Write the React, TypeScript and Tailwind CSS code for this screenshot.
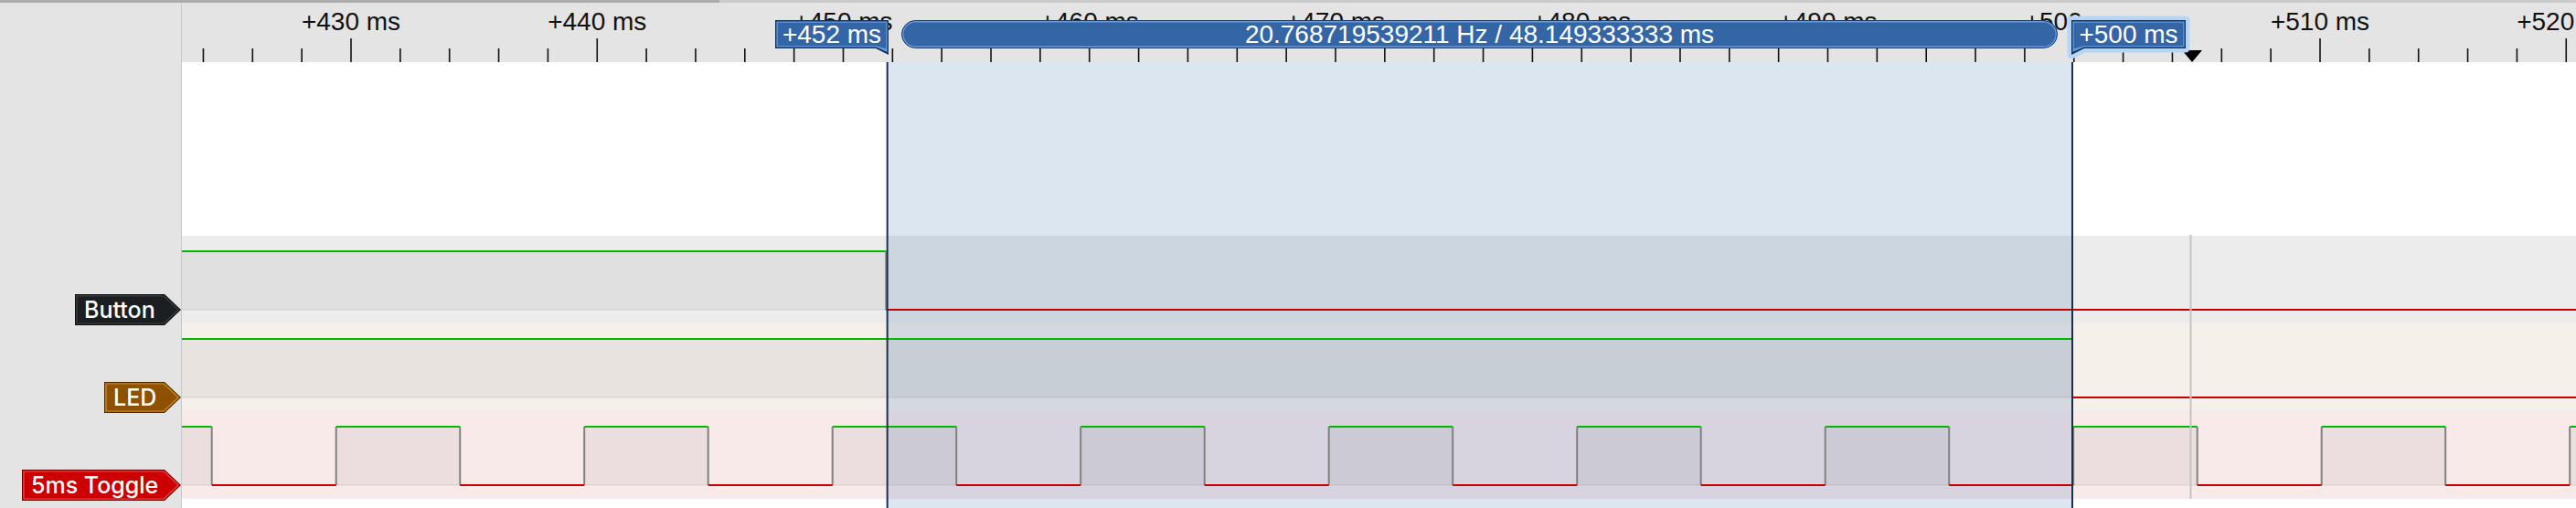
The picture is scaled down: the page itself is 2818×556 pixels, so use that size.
import React from "react";

// time axis: px per ms, x relative to the ruler/wave origin (page x = 199)
const PX_MS = 26.925;
const tx = (t: number) => 185 + (t - 430) * PX_MS;

const WAVE_W = 2619;
const SEL_L = 771.7;
const SEL_R = 2068;

const channels = [
  { name: "Button", w: 116, wc: "w-[116px]", fill: "#1c1f21", outer: "#0d0e0f", inner: "#3b3e40" },
  { name: "LED", w: 84, wc: "w-[84px]", fill: "#8d5100", outer: "#4a2b00", inner: "#d98a1b" },
  { name: "5ms Toggle", w: 174, wc: "w-[174px]", fill: "#cc0000", outer: "#6b0000", inner: "#ff3c3c" },
];

function Tag({ ch }: { ch: (typeof channels)[number] }) {
  const w = ch.w;
  const pts = (i: number) =>
    `${i},${i} ${w - 18 - 0.414 * i},${i} ${w - 1.414 * i},17 ${w - 18 - 0.414 * i},${34 - i} ${i},${34 - i}`;
  return (
    <div className={`relative h-[34px] ${ch.wc}`}>
      <svg className="absolute inset-0" width={w} height={34} viewBox={`0 0 ${w} 34`}>
        <polygon points={pts(0)} fill={ch.outer} />
        <polygon points={pts(1.2)} fill={ch.inner} />
        <polygon points={pts(2.6)} fill={ch.fill} />
      </svg>
      <span className="relative flex h-full items-center pl-[10px] font-['Inter',sans-serif] text-[25px] leading-none font-medium text-white">
        {ch.name}
      </span>
    </div>
  );
}

function Ruler() {
  const ticks: number[] = [];
  for (let t = 422; t <= 522; t += 2) ticks.push(t);
  const labels = ticks.filter((t) => t % 10 === 0);
  return (
    <div className="relative h-[65px] shrink-0 overflow-hidden bg-[#e4e4e4]">
      <svg className="absolute inset-0" width={WAVE_W} height={65}>
        {ticks.map((t) => {
          const x = tx(t);
          return (
            <line key={t} x1={x} x2={x} y1={t % 10 === 0 ? 39 : 50} y2={65} stroke="#111" strokeWidth={1.6} />
          );
        })}
        {labels.map((t) => (
          <text key={t} x={tx(t)} y={30} textAnchor="middle" fontSize={28} fill="#111">
            +{t} ms
          </text>
        ))}
        <polygon points="2188,52 2210,52 2199,65" fill="#000" />
      </svg>

      {/* start marker */}
      <div className="absolute left-[649px] top-[19px] h-[38px] w-[124px]">
        <svg className="absolute inset-0" width={124} height={38}>
          <path d="M0,0H124V38L110,31H0Z" fill="#1b3253" />
          <path d="M1.4,1.4H122.6V35L110.6,29.6H1.4Z" fill="#5f9fe9" />
          <path d="M2.7,2.7H121.3V31.5L111,28.3H2.7Z" fill="#3465a6" />
        </svg>
        <div className="relative flex h-[31px] items-center justify-center text-[28px] leading-none text-white">
          +452 ms
        </div>
      </div>

      {/* frequency / period pill */}
      <div className="absolute left-[787px] top-[19px] flex h-[31px] w-[1265px] items-center justify-center rounded-full border border-[#1f395d] bg-[#3466a6] text-[28px] leading-none text-white shadow-[inset_0_0_0_1.5px_#5e9de8]">
        20.768719539211 Hz / 48.149333333 ms
      </div>

      {/* end marker (selected) */}
      <div className="absolute left-[2062px] top-[14px] h-[49px] w-[135px]">
        <svg className="absolute inset-0" width={135} height={49}>
          <path
            d="M5,5H130V36H19L5,43Z"
            fill="#b6d6f8"
            stroke="#b6d6f8"
            strokeWidth={9}
            strokeLinejoin="round"
          />
          <path d="M5,5H130V36H19L5,43Z" fill="#1b3253" />
          <path d="M6.4,6.4H128.6V34.6H18.6L6.4,40Z" fill="#5f9fe9" />
          <path d="M7.7,7.7H127.3V33.3H18L7.7,36.5Z" fill="#3465a6" />
        </svg>
        <div className="absolute left-[5px] top-[5px] flex h-[31px] w-[125px] items-center justify-center text-[28px] leading-none text-white">
          +500 ms
        </div>
      </div>
    </div>
  );
}

function Waveforms() {
  const P = 271.5;
  const fall = Array.from({ length: 10 }, (_, k) => 32.7 + k * P);
  const rise = Array.from({ length: 10 }, (_, k) => 168.7 + k * P);
  const highs: [number, number][] = [[0, fall[0]]];
  rise.forEach((r, k) => highs.push([r, Math.min(fall[k + 1] ?? WAVE_W, WAVE_W)]));
  const lows: [number, number][] = fall.map((f, k) => [f, Math.min(rise[k], WAVE_W)]);
  const edges = [...fall, ...rise].filter((x) => x < WAVE_W);

  const green = "#00b900";
  const red = "#c80000";
  const gray = "#808080";
  const sw = 2;

  return (
    <div className="h-[488px] shrink-0 bg-white">
      <svg width={WAVE_W} height={488}>
        {/* row bands */}
        <rect x={0} y={190} width={WAVE_W} height={96} fill="#ececec" />
        <rect x={0} y={286} width={WAVE_W} height={96} fill="#f5f0ea" />
        <rect x={0} y={382} width={WAVE_W} height={96} fill="#f9eaea" />

        {/* fill under high level */}
        <rect x={0} y={207} width={770.3} height={64} fill="#000" fillOpacity={0.05} />
        <rect x={0} y={303} width={SEL_R} height={64} fill="#000" fillOpacity={0.05} />
        {highs.map(([a, b], i) => (
          <rect key={i} x={a} y={399} width={b - a} height={64} fill="#000" fillOpacity={0.05} />
        ))}

        {/* faint baselines */}
        {[271, 367, 463].map((y) => (
          <line key={y} x1={0} x2={WAVE_W} y1={y} y2={y} stroke="#000" strokeOpacity={0.07} strokeWidth={1.5} />
        ))}

        {/* selection */}
        <rect x={SEL_L} y={0} width={SEL_R - SEL_L} height={488} fill="rgb(40,97,166)" fillOpacity={0.16} />

        {/* Button */}
        <line x1={0} x2={770.3} y1={207} y2={207} stroke={green} strokeWidth={sw} />
        <line x1={770.3} x2={770.3} y1={207} y2={271} stroke={gray} strokeWidth={sw} />
        <line x1={770.3} x2={WAVE_W} y1={271} y2={271} stroke={red} strokeWidth={sw} />

        {/* LED */}
        <line x1={0} x2={SEL_R} y1={303} y2={303} stroke={green} strokeWidth={sw} />
        <line x1={SEL_R} x2={SEL_R} y1={303} y2={367} stroke={gray} strokeWidth={sw} />
        <line x1={SEL_R} x2={WAVE_W} y1={367} y2={367} stroke={red} strokeWidth={sw} />

        {/* 5ms Toggle */}
        {edges.map((x, i) => (
          <line key={i} x1={x} x2={x} y1={399} y2={463} stroke={gray} strokeWidth={sw} />
        ))}
        {highs.map(([a, b], i) => (
          <line key={i} x1={a} x2={b} y1={399} y2={399} stroke={green} strokeWidth={sw} />
        ))}
        {lows.map(([a, b], i) => (
          <line key={i} x1={a} x2={b} y1={463} y2={463} stroke={red} strokeWidth={sw} />
        ))}

        {/* cursor */}
        <line x1={2197.5} x2={2197.5} y1={189} y2={478} stroke="#c4c4c4" strokeWidth={2} />

        {/* selection edges */}
        <line x1={SEL_L} x2={SEL_L} y1={0} y2={488} stroke="#1b2e4c" strokeWidth={2} />
        <line x1={SEL_R} x2={SEL_R} y1={0} y2={488} stroke="#1b2e4c" strokeWidth={2} />
      </svg>
    </div>
  );
}

export default function App() {
  return (
    <div className="flex h-[556px] w-[2818px] flex-col overflow-hidden bg-white font-['Liberation_Sans',Arial,sans-serif]">
      <div className="flex h-[3px] shrink-0">
        <div className="w-[787px] bg-[#acacac]" />
        <div className="flex-1 bg-[#cbcbcb]" />
      </div>
      <div className="flex min-h-0 flex-1">
        <aside className="flex w-[199px] shrink-0 flex-col border-r border-[#c8c8c8] bg-[#e4e4e4]">
          <div className="h-[255px] shrink-0" />
          {channels.map((ch) => (
            <div key={ch.name} className="flex h-[96px] shrink-0 justify-end pt-[64px]">
              <Tag ch={ch} />
            </div>
          ))}
        </aside>
        <main className="flex min-w-0 flex-1 flex-col">
          <Ruler />
          <Waveforms />
        </main>
      </div>
    </div>
  );
}
